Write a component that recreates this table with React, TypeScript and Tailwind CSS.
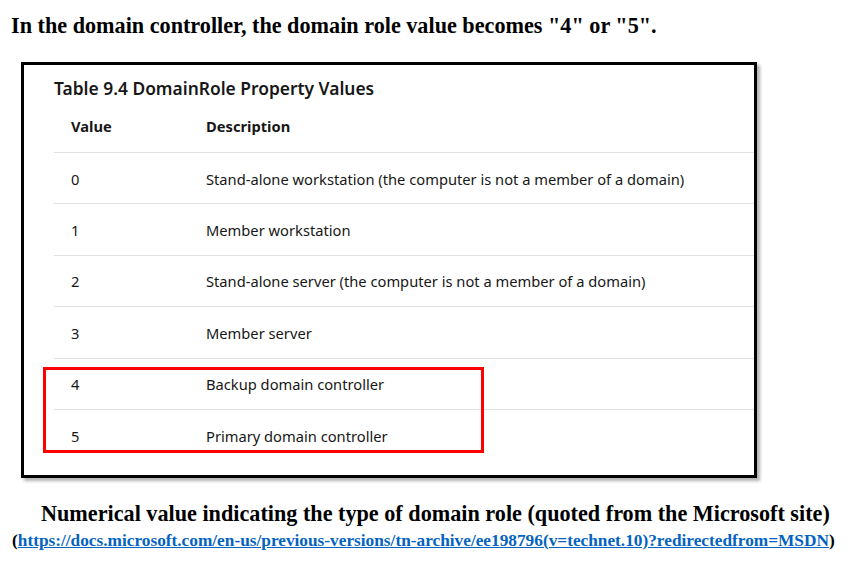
const rows = [
  { value: "0", text: "Stand-alone workstation (the computer is not a member of a domain)" },
  { value: "1", text: "Member workstation" },
  { value: "2", text: "Stand-alone server (the computer is not a member of a domain)" },
  { value: "3", text: "Member server" },
  { value: "4", text: "Backup domain controller" },
  { value: "5", text: "Primary domain controller" },
];

const serif = "font-['Liberation_Serif','Times_New_Roman',serif]";

const App: React.FC = () => (
  <div className="w-[850px] h-[565px] bg-white overflow-hidden">
    <p className={`${serif} pl-[11px] pt-[13px] text-[22.2px] leading-[26px] font-bold text-black`}>
      In the domain controller, the domain role value becomes "4" or "5".
    </p>

    <div className="relative ml-[21px] mt-[23px] w-[736px] h-[416px] border-[3px] border-black bg-white shadow-[3px_3px_3px_rgba(0,0,0,0.3)] font-['Noto_Sans',sans-serif] text-[#171717]">
      <div className="pl-[30px] pr-0 pt-[10px]">
        <h3 className="text-[17.4px] leading-[26px] font-semibold">Table 9.4 DomainRole Property Values</h3>
        <div className="flex h-[51px] items-center text-[14.7px] font-bold">
          <div className="w-[152px] pl-[17px]">Value</div>
          <div>Description</div>
        </div>
        {rows.map((r) => (
          <div key={r.value} className="flex h-[51.4px] items-center border-t border-[#e1e1e1] text-[14.7px] pt-[1px]">
            <div className="w-[152px] pl-[17px]">{r.value}</div>
            <div>{r.text}</div>
          </div>
        ))}
      </div>
      {/* highlight around rows 4 and 5 */}
      <div className="absolute left-[19px] top-[302px] w-[441px] h-[86px] border-[3px] border-[#ff0000]" />
    </div>

    <p className={`${serif} pl-[41px] pt-[23px] text-[22.2px] leading-[26px] font-bold text-black`}>
      Numerical value indicating the type of domain role (quoted from the Microsoft site)
    </p>
    <p className={`${serif} pl-[12px] pt-[4px] text-[17.3px] leading-[20px] font-bold text-black`}>
      (
      <a href="#" className="text-[#0563c1] underline">
        https://docs.microsoft.com/en-us/previous-versions/tn-archive/ee198796(v=technet.10)?redirectedfrom=MSDN
      </a>
      )
    </p>
  </div>
);

export default App;
